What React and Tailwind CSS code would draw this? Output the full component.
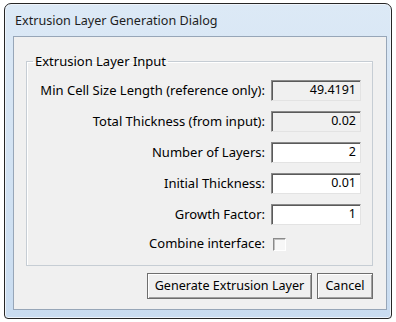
import React from "react";

const font = { fontFamily: '"Noto Sans", "Open Sans", sans-serif' };

function Field({ value, readOnly }) {
  return (
    <div
      className={`h-[21px] w-[90px] border border-t-[#8a8a8a] border-l-[#8a8a8a] border-r-[#e3e3e3] border-b-[#e3e3e3] shadow-[inset_1px_1px_0_#5a5a5a] flex items-center justify-end pr-[4px] text-[12.5px] text-black ${
        readOnly ? "bg-[#f0f0f0]" : "bg-white"
      }`}
    >
      {value}
    </div>
  );
}

function Row({ label, children }) {
  return (
    <div className="flex items-center h-[21px]">
      <div className="w-[239px] text-right pr-[1px] text-[13px] text-black whitespace-nowrap">{label}</div>
      <div className="ml-[5px]">{children}</div>
    </div>
  );
}

function Btn({ children, w }) {
  return (
    <button
      className={`${w} h-[26px] bg-[#f0f0f0] border border-[#6e6e6e] shadow-[inset_1px_1px_0_#ffffff,inset_-1px_-1px_0_#a0a0a0] text-[12.6px] text-black flex items-center justify-center`}
      style={font}
    >
      {children}
    </button>
  );
}

export default function App() {
  return (
    <div className="w-[396px] h-[322px] bg-white pt-[3px] pl-[4px]" style={font}>
      <div className="w-[388px] h-[316px] rounded-t-[7px] rounded-b-[4px] border border-[#262626] bg-gradient-to-b from-[#dce9f6] to-[#c9dcf0] shadow-[inset_0_0_0_1px_#eef4fb] flex flex-col pl-[8px] pr-[4px] pb-[8px]">
        <div className="h-[32px] flex items-center pl-[2px] pt-[2px] text-[12.6px] text-[#1e1e1e]">
          Extrusion Layer Generation Dialog
        </div>
        <div className="flex-1 border border-[#97a6b8] bg-[#f0f0f0] flex flex-col pl-[12px] pr-[13px] pt-[16px]">
          <fieldset className="border border-[#c6cdd4] shadow-[inset_1px_1px_0_#ffffff] pl-0 pr-[11px] pt-[10px] pb-[13px] m-0 min-w-0">
            <legend className="ml-[6px] px-[2px] text-[13px] text-black leading-[17px]">Extrusion Layer Input</legend>
            <div className="flex flex-col gap-[10px]">
              <Row label="Min Cell Size Length (reference only):">
                <Field value="49.4191" readOnly />
              </Row>
              <Row label="Total Thickness (from input):">
                <Field value="0.02" readOnly />
              </Row>
              <Row label="Number of Layers:">
                <Field value="2" />
              </Row>
              <Row label="Initial Thickness:">
                <Field value="0.01" />
              </Row>
              <Row label="Growth Factor:">
                <Field value="1" />
              </Row>
              <div className="flex items-center h-[16px] mt-[1px]">
                <div className="w-[239px] text-right pr-[1px] text-[13px] text-black whitespace-nowrap">Combine interface:</div>
                <div className="ml-[7px] w-[13px] h-[13px] border border-t-[#8a8a8a] border-l-[#8a8a8a] border-r-[#ffffff] border-b-[#ffffff] shadow-[inset_1px_1px_0_#c0c0c0] bg-[#f7f7f7]"></div>
              </div>
            </div>
          </fieldset>
          <div className="flex justify-end gap-[5px] mt-[7px]">
            <Btn w="w-[165px]">Generate Extrusion Layer</Btn>
            <Btn w="w-[56px]">Cancel</Btn>
          </div>
        </div>
      </div>
    </div>
  );
}
